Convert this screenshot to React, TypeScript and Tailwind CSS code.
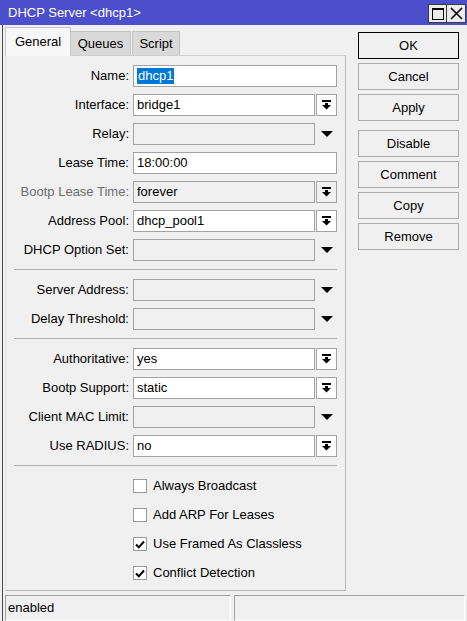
import React from 'react'

// ── Small drawings ─────────────────────────────────────────────────────────

function ComboIcon() {
  return (
    <svg width="9" height="10" viewBox="0 0 9 10">
      <rect x="0" y="0" width="9" height="2" fill="#000" />
      <rect x="3" y="3" width="3" height="2" fill="#000" />
      <polygon points="0,5 9,5 4.5,9.5" fill="#000" />
    </svg>
  )
}

function Triangle() {
  return (
    <svg width="12" height="6" viewBox="0 0 12 6">
      <polygon points="0,0 12,0 6,6" fill="#000" />
    </svg>
  )
}

// ── Form rows ──────────────────────────────────────────────────────────────

type Kind = 'text' | 'combo' | 'empty' | 'grayCombo'

function Row({
  label,
  value,
  kind,
  selected,
}: {
  label: string
  value?: string
  kind: Kind
  selected?: boolean
}) {
  const gray = kind === 'grayCombo'
  return (
    <div className="flex h-[22px] items-center">
      <div className={`w-[123px] text-right whitespace-nowrap ${gray ? 'text-[#6d6d6d]' : 'text-black'}`}>
        {label}
      </div>
      <div className="ml-[4px] flex w-[204px] h-[22px]">
        {kind === 'text' && (
          <div className="flex-1 border border-[#a3a3a3] bg-white pl-[3px] flex items-center">
            {selected ? (
              <span className="bg-[#0078d7] text-white leading-[16px] px-[1px]">{value}</span>
            ) : (
              value
            )}
          </div>
        )}
        {(kind === 'combo' || kind === 'grayCombo') && (
          <>
            <div
              className={`w-[182px] border border-[#a3a3a3] pl-[3px] flex items-center ${
                gray ? 'bg-[#f0f0f0]' : 'bg-white'
              }`}
            >
              {value}
            </div>
            <div
              className={`ml-[1px] w-[21px] border border-[#a3a3a3] flex items-center justify-center ${
                gray ? 'bg-[#f0f0f0]' : 'bg-white'
              }`}
            >
              <ComboIcon />
            </div>
          </>
        )}
        {kind === 'empty' && (
          <>
            <div className="w-[182px] border border-[#a3a3a3] bg-[#f0f0f0]" />
            <div className="ml-[1px] w-[21px] flex items-center justify-center">
              <Triangle />
            </div>
          </>
        )}
      </div>
    </div>
  )
}

function Sep() {
  return <div className="mt-[8px] mb-[9px] ml-[8px] w-[323px] h-px bg-[#b4b4b4]" />
}

function Check({ label, checked }: { label: string; checked: boolean }) {
  return (
    <div className="flex h-[22px] items-center">
      <div className="ml-[127px] w-[14px] h-[14px] border border-[#9a9a9a] bg-white flex items-center justify-center">
        {checked && (
          <svg width="10" height="9" viewBox="0 0 10 9">
            <polyline points="1,4.5 3.8,7.3 9,1.5" fill="none" stroke="#000" strokeWidth="2" />
          </svg>
        )}
      </div>
      <span className="ml-[6px] whitespace-nowrap">{label}</span>
    </div>
  )
}

function SideButton({ label, primary }: { label: string; primary?: boolean }) {
  return (
    <div
      className={`h-[27px] flex items-center justify-center bg-[#f0f0f0] border ${
        primary ? 'border-black' : 'border-[#adadad]'
      }`}
    >
      {label}
    </div>
  )
}

// ── Main component ─────────────────────────────────────────────────────────

export default function App() {
  return (
    <div
      className="w-[467px] h-[621px] bg-[#f0f0f0] overflow-hidden text-[13px] text-black"
      style={{ fontFamily: '"Liberation Sans", Arial, sans-serif' }}
    >
      {/* Title bar */}
      <div className="h-[25px] bg-[#4b4fcb] flex items-start">
        <div className="pl-[8px] pt-[4px] text-white text-[13px] leading-[17px] flex-1">DHCP Server &lt;dhcp1&gt;</div>
        <div className="mt-[4px] mr-[1px] flex">
          <div className="w-[19px] h-[19px] border border-[#3a3a3a] bg-[#ececec] flex items-center justify-center">
            <div className="w-[12px] h-[12px] border border-black border-t-2" />
          </div>
          <div className="w-[19px] h-[19px] border border-l-0 border-[#3a3a3a] bg-[#ececec] flex items-center justify-center">
            <svg width="13" height="13" viewBox="0 0 13 13">
              <path d="M1 1 L12 12 M12 1 L1 12" stroke="#000" strokeWidth="1.6" />
            </svg>
          </div>
        </div>
      </div>

      {/* Body */}
      <div className="ml-[2px] border-l border-[#4a4a4a] h-[596px] flex flex-col">
        <div className="flex">
          {/* Tabs + page */}
          <div className="ml-[2px] mt-[2px] w-[341px]">
            <div className="flex h-[28px] items-end">
              <div className="relative z-10 h-[29px] -mb-px w-[66px] bg-[#f7f7f7] border border-b-0 border-[#c8c8c8] flex items-center justify-center">
                General
              </div>
              <div className="h-[24px] w-[60px] bg-[#d9d9d9] border border-l-0 border-b-0 border-[#c3c3c3] flex items-center justify-center">
                Queues
              </div>
              <div className="ml-[1px] h-[24px] w-[48px] bg-[#d9d9d9] border border-b-0 border-[#c3c3c3] flex items-center justify-center">
                Script
              </div>
            </div>
            <div className="h-[536px] border border-[#b9b9b9] border-t-[#d0d0d0] border-l-[#e4e4e4] pt-[9px]">
              <div className="flex flex-col gap-[7px]">
                <Row label="Name:" value="dhcp1" kind="text" selected />
                <Row label="Interface:" value="bridge1" kind="combo" />
                <Row label="Relay:" kind="empty" />
                <Row label="Lease Time:" value="18:00:00" kind="text" />
                <Row label="Bootp Lease Time:" value="forever" kind="grayCombo" />
                <Row label="Address Pool:" value="dhcp_pool1" kind="combo" />
                <Row label="DHCP Option Set:" kind="empty" />
              </div>
              <Sep />
              <div className="flex flex-col gap-[7px]">
                <Row label="Server Address:" kind="empty" />
                <Row label="Delay Threshold:" kind="empty" />
              </div>
              <Sep />
              <div className="flex flex-col gap-[7px]">
                <Row label="Authoritative:" value="yes" kind="combo" />
                <Row label="Bootp Support:" value="static" kind="combo" />
                <Row label="Client MAC Limit:" kind="empty" />
                <Row label="Use RADIUS:" value="no" kind="combo" />
              </div>
              <Sep />
              <div className="flex flex-col gap-[7px]">
                <Check label="Always Broadcast" checked={false} />
                <Check label="Add ARP For Leases" checked={false} />
                <Check label="Use Framed As Classless" checked />
                <Check label="Conflict Detection" checked />
              </div>
            </div>
          </div>

          {/* Side buttons */}
          <div className="ml-[12px] mt-[7px] w-[101px] flex flex-col">
            <div className="flex flex-col gap-[4px]">
              <SideButton label="OK" primary />
              <SideButton label="Cancel" />
              <SideButton label="Apply" />
            </div>
            <div className="mt-[9px] flex flex-col gap-[4px]">
              <SideButton label="Disable" />
              <SideButton label="Comment" />
              <SideButton label="Copy" />
              <SideButton label="Remove" />
            </div>
          </div>
        </div>

        {/* Status bar */}
        <div className="mt-[4px] ml-[2px] flex h-[26px] gap-[3px]">
          <div className="w-[226px] border border-[#a0a0a0] border-r-white border-b-white flex items-center pl-[2px]">
            enabled
          </div>
          <div className="w-[231px] border border-[#a0a0a0] border-r-white border-b-white" />
        </div>
      </div>
    </div>
  )
}
